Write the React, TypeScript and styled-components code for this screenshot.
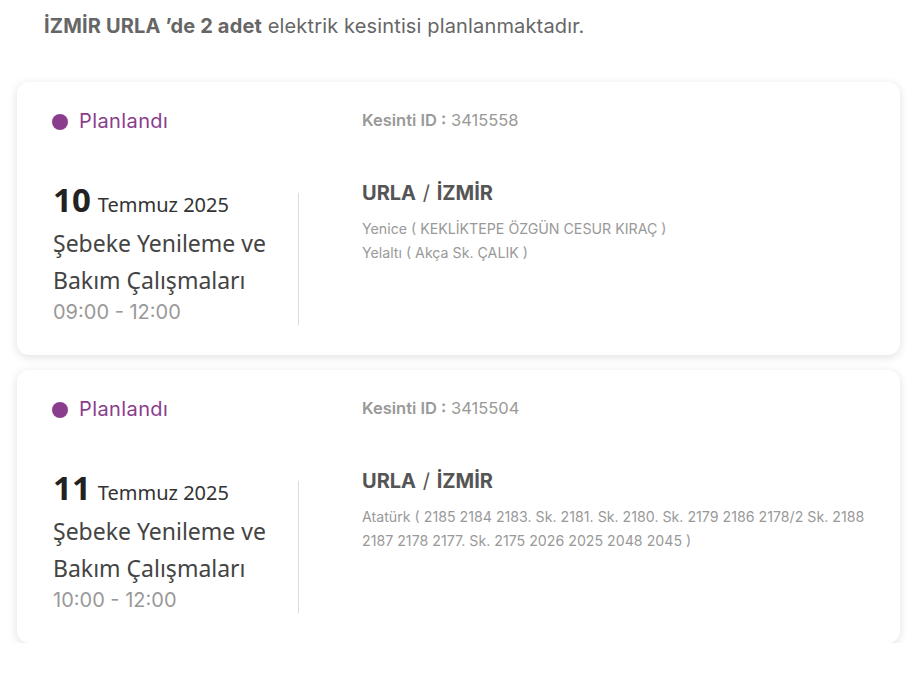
import React from "react";
import styled, { createGlobalStyle } from "styled-components";

const Global = createGlobalStyle`
  html, body { margin: 0; padding: 0; background: #ffffff; }
  body { font-family: "Inter", "Liberation Sans", sans-serif; -webkit-font-smoothing: antialiased; }
`;

const Page = styled.div`
  width: 916px;
  padding: 0 16px 0 17px;
  box-sizing: border-box;
`;

const Summary = styled.p`
  margin: 0;
  padding: 13px 0 0 27px;
  height: 70px;
  box-sizing: border-box;
  font-size: 20px;
  letter-spacing: 0.15px;
  line-height: 26px;
  color: #666666;
  b { font-weight: 700; color: #666; }
`;

const List = styled.div`
  display: flex;
  flex-direction: column;
  gap: 15px;
  padding-top: 12px;
`;

const Card = styled.div`
  background: #fff;
  border-radius: 12px;
  box-shadow: 0 2px 10px rgba(0, 0, 0, 0.13);
  padding: 26px 32px 30px 35px;
  height: 273px;
  box-sizing: border-box;
`;

const TopRow = styled.div`
  display: flex;
  align-items: center;
  height: 26px;
`;

const Status = styled.div`
  width: 310px;
  display: flex;
  align-items: center;
  gap: 11px;
  color: #8a3d8d;
  font-size: 20px;
  letter-spacing: 0.4px;
`;

const Dot = styled.span`
  width: 16px;
  height: 16px;
  border-radius: 50%;
  background: #8a3d8d;
  margin-top: 2px;
`;

const OutageId = styled.div`
  color: #999;
  font-size: 16.5px;
  margin-top: -3px;
  b { font-weight: 600; }
`;

const Body = styled.div`
  display: flex;
  margin-top: 43px;
`;

const LeftCol = styled.div`
  width: 246px;
  padding-left: 1px;
  box-sizing: border-box;
  font-family: "Noto Sans", "Open Sans", sans-serif;
`;

const DateLine = styled.div`
  display: flex;
  align-items: baseline;
  gap: 7px;
  color: #222;
  height: 48px;
`;

const Day = styled.span`
  font-size: 33px;
  font-weight: 700;
  color: #222;
`;

const MonthYear = styled.span`
  font-size: 20px;
  color: #333;
`;

const Title = styled.div`
  font-size: 23px;
  line-height: 37px;
  color: #444;
`;

const Time = styled.div`
  font-family: "Inter", sans-serif;
  font-size: 20px;
  line-height: 26px;
  color: #999;
`;

const Divider = styled.div`
  width: 1px;
  background: #dcdcdc;
  margin-top: 16px;
`;

const RightCol = styled.div`
  flex: 1;
  padding-left: 63px;
`;

const Place = styled.div`
  font-size: 20px;
  font-weight: 700;
  color: #555;
  line-height: 24px;
  margin-top: 4px;
  span { font-weight: 400; padding: 0 2px; }
`;

const Streets = styled.div`
  margin-top: 12px;
  font-size: 14.2px;
  line-height: 24px;
  color: #999;
`;

type Outage = {
  id: string;
  day: string;
  time: string;
  streets: string[];
};

const outages: Outage[] = [
  {
    id: "3415558",
    day: "10",
    time: "09:00 - 12:00",
    streets: ["Yenice ( KEKLİKTEPE ÖZGÜN CESUR KIRAÇ )", "Yelaltı ( Akça Sk. ÇALIK )"],
  },
  {
    id: "3415504",
    day: "11",
    time: "10:00 - 12:00",
    streets: [
      "Atatürk ( 2185 2184 2183. Sk. 2181. Sk. 2180. Sk. 2179 2186 2178/2 Sk. 2188 2187 2178 2177. Sk. 2175 2026 2025 2048 2045 )",
    ],
  },
];

export default function App() {
  return (
    <Page>
      <Global />
      <Summary>
        <b>İZMİR URLA ’de 2 adet</b> elektrik kesintisi planlanmaktadır.
      </Summary>
      <List>
        {outages.map((o) => (
          <Card key={o.id}>
            <TopRow>
              <Status>
                <Dot />
                Planlandı
              </Status>
              <OutageId>
                <b>Kesinti ID :</b> {o.id}
              </OutageId>
            </TopRow>
            <Body>
              <LeftCol>
                <DateLine>
                  <Day>{o.day}</Day>
                  <MonthYear>Temmuz 2025</MonthYear>
                </DateLine>
                <Title>
                  Şebeke Yenileme ve
                  <br />
                  Bakım Çalışmaları
                </Title>
                <Time>{o.time}</Time>
              </LeftCol>
              <Divider />
              <RightCol>
                <Place>
                  URLA <span>/</span> İZMİR
                </Place>
                <Streets>
                  {o.streets.map((s) => (
                    <div key={s}>{s}</div>
                  ))}
                </Streets>
              </RightCol>
            </Body>
          </Card>
        ))}
      </List>
    </Page>
  );
}
